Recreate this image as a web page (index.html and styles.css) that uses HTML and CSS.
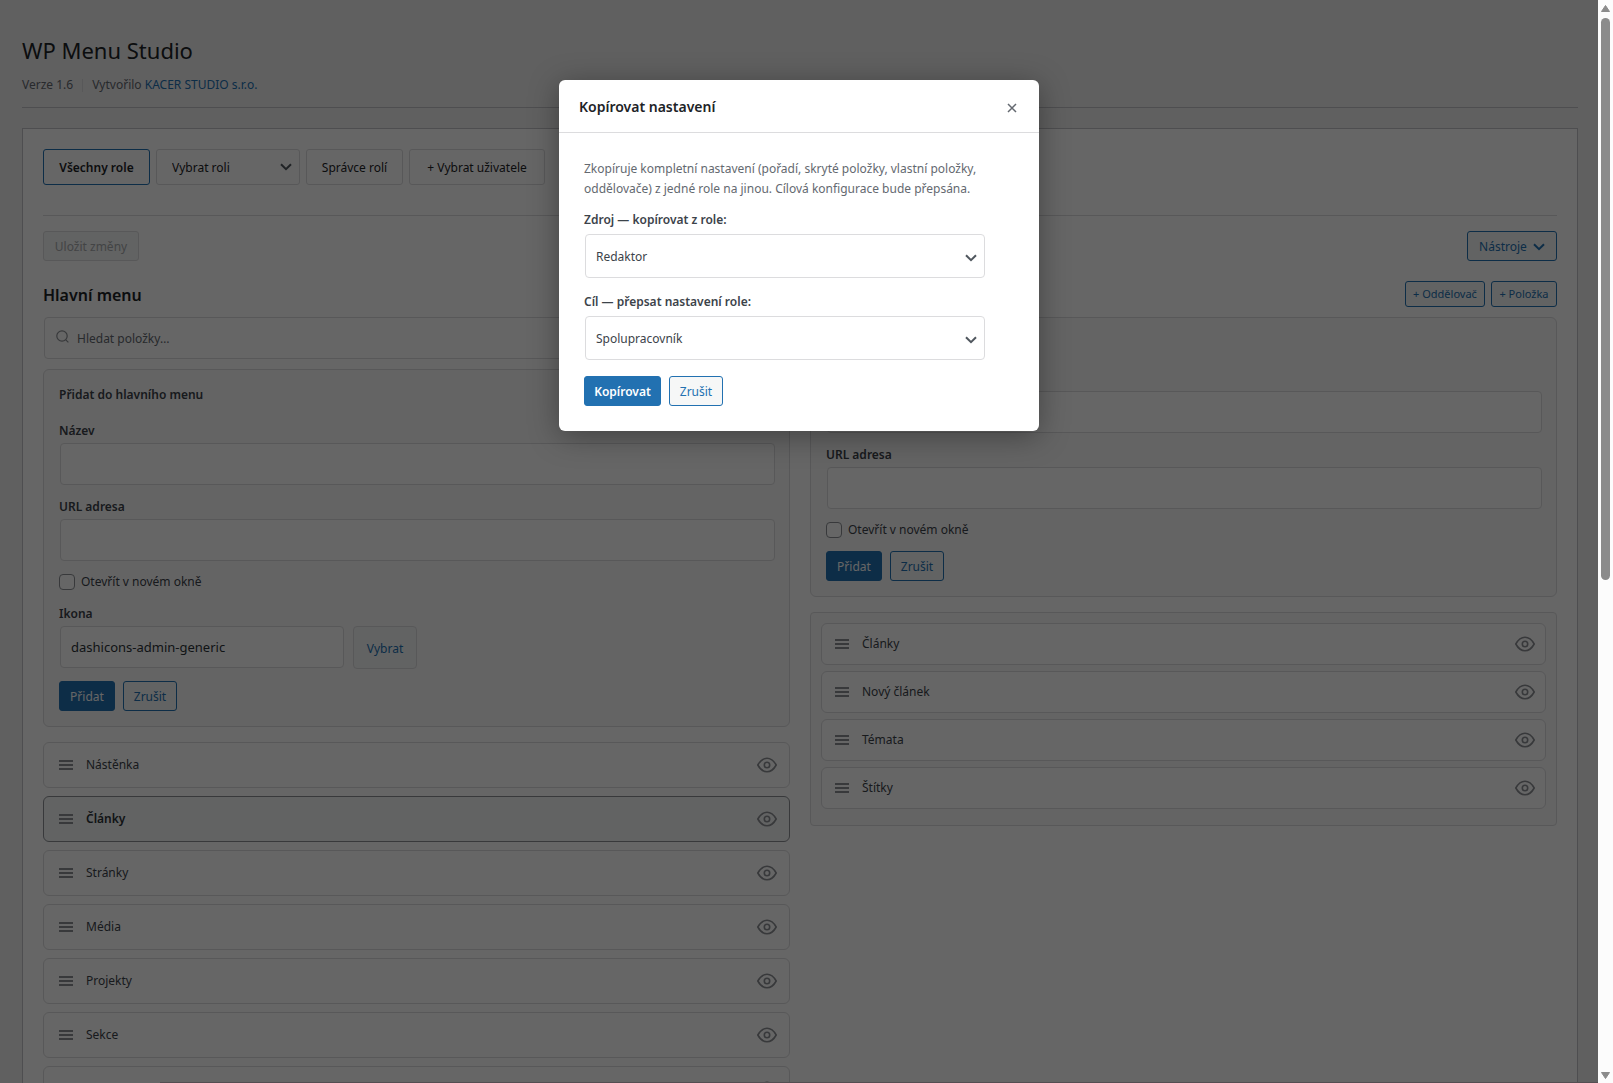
FILE: index.html
```html
<!DOCTYPE html>
<html lang="cs">
<head>
<meta charset="utf-8">
<meta name="viewport" content="width=device-width, initial-scale=1">
<title>WP Menu Studio</title>
<link rel="stylesheet" href="styles.css">
</head>
<body>
<svg class="sprite" aria-hidden="true">
  <symbol id="grip" viewBox="0 0 14 10"><path d="M0 1h14M0 5h14M0 9h14" stroke="currentColor" stroke-width="2" fill="none"/></symbol>
  <symbol id="eye" viewBox="0 0 20 16"><path d="M.8 8C3 4 6.200 1.200 10 1.200S17 4 19.200 8C17 12 13.800 14.800 10 14.800S3 12 .8 8z" fill="none" stroke="currentColor" stroke-width="1.600" stroke-linejoin="round"/><circle cx="10" cy="8" r="2.700" fill="none" stroke="currentColor" stroke-width="1.600"/></symbol>
  <symbol id="chevron" viewBox="0 0 12 8"><path d="M1 1.200l5 5 5-5" fill="none" stroke="currentColor" stroke-width="2"/></symbol>
</svg>
<div class="shell">
  <div class="page">
    <main class="wrap">
      <header class="page-head">
        <h1 class="page-title">WP Menu Studio</h1>
        <p class="meta"><span>Verze 1.6</span><span class="meta-by">Vytvořilo <a href="#">KACER STUDIO s.r.o.</a></span></p>
      </header>

      <section class="panel">
        <div class="roles">
          <button type="button" class="role role-all">Všechny role</button>
          <div class="select-wrap role-select">
            <select class="role" aria-label="Vybrat roli"><option>Vybrat roli</option></select>
            <svg class="chevron"><use href="#chevron"/></svg>
          </div>
          <button type="button" class="role role-manage">Správce rolí</button>
          <button type="button" class="role role-user">+ Vybrat uživatele</button>
        </div>

        <div class="toolbar">
          <button type="button" class="btn btn-save" disabled>Uložit změny</button>
          <button type="button" class="btn btn-tools">Nástroje <svg class="chevron"><use href="#chevron"/></svg></button>
        </div>

        <div class="columns">
          <section class="column">
            <div class="column-head"><h2>Hlavní menu</h2></div>
            <div class="search">
              <svg class="search-icon" viewBox="0 0 13 13"><circle cx="6" cy="6" r="5.200" fill="none" stroke="currentColor" stroke-width="1.200"/><path d="M9.800 9.800l2.600 2.600" stroke="currentColor" stroke-width="1.200"/></svg>
              <input type="search" class="text-input" placeholder="Hledat položky…" aria-label="Hledat položky">
            </div>
            <form class="card">
              <h3 class="card-title">Přidat do hlavního menu</h3>
              <div class="field"><label for="main-name">Název</label><input class="text-input" id="main-name" type="text"></div>
              <div class="field"><label for="main-url">URL adresa</label><input class="text-input" id="main-url" type="text"></div>
              <label class="check"><input type="checkbox">Otevřít v novém okně</label>
              <div class="field">
                <label for="main-icon">Ikona</label>
                <div class="icon-row">
                  <input class="text-input" id="main-icon" type="text" value="dashicons-admin-generic">
                  <button type="button" class="btn-pick">Vybrat</button>
                </div>
              </div>
              <div class="actions"><button type="button" class="btn btn-primary btn-add">Přidat</button><button type="button" class="btn btn-cancel">Zrušit</button></div>
            </form>
            <ul class="items">
              <li class="item"><svg class="grip"><use href="#grip"/></svg><span>Nástěnka</span><button type="button" class="toggle" aria-label="Skrýt"><svg><use href="#eye"/></svg></button></li>
              <li class="item item-active"><svg class="grip"><use href="#grip"/></svg><span>Články</span><button type="button" class="toggle" aria-label="Skrýt"><svg><use href="#eye"/></svg></button></li>
              <li class="item"><svg class="grip"><use href="#grip"/></svg><span>Stránky</span><button type="button" class="toggle" aria-label="Skrýt"><svg><use href="#eye"/></svg></button></li>
              <li class="item"><svg class="grip"><use href="#grip"/></svg><span>Média</span><button type="button" class="toggle" aria-label="Skrýt"><svg><use href="#eye"/></svg></button></li>
              <li class="item"><svg class="grip"><use href="#grip"/></svg><span>Projekty</span><button type="button" class="toggle" aria-label="Skrýt"><svg><use href="#eye"/></svg></button></li>
              <li class="item"><svg class="grip"><use href="#grip"/></svg><span>Sekce</span><button type="button" class="toggle" aria-label="Skrýt"><svg><use href="#eye"/></svg></button></li>
              <li class="item"><button type="button" class="toggle" aria-label="Skrýt"><svg><use href="#eye"/></svg></button></li>
            </ul>
          </section>

          <section class="column">
            <div class="column-head column-head-end">
              <button type="button" class="btn btn-small btn-separator">+ Oddělovač</button>
              <button type="button" class="btn btn-small btn-item">+ Položka</button>
            </div>
            <form class="card">
              <div class="card-title"></div>
              <div class="field field-unlabelled"><input class="text-input" type="text" aria-label="Název"></div>
              <div class="field"><label for="sub-url">URL adresa</label><input class="text-input" id="sub-url" type="text"></div>
              <label class="check"><input type="checkbox">Otevřít v novém okně</label>
              <div class="actions"><button type="button" class="btn btn-primary btn-add">Přidat</button><button type="button" class="btn btn-cancel">Zrušit</button></div>
            </form>
            <ul class="items items-nested">
              <li class="item"><svg class="grip"><use href="#grip"/></svg><span>Články</span><button type="button" class="toggle" aria-label="Skrýt"><svg><use href="#eye"/></svg></button></li>
              <li class="item"><svg class="grip"><use href="#grip"/></svg><span>Nový článek</span><button type="button" class="toggle" aria-label="Skrýt"><svg><use href="#eye"/></svg></button></li>
              <li class="item"><svg class="grip"><use href="#grip"/></svg><span>Témata</span><button type="button" class="toggle" aria-label="Skrýt"><svg><use href="#eye"/></svg></button></li>
              <li class="item"><svg class="grip"><use href="#grip"/></svg><span>Štítky</span><button type="button" class="toggle" aria-label="Skrýt"><svg><use href="#eye"/></svg></button></li>
            </ul>
          </section>
        </div>
      </section>
    </main>

    <div class="overlay">
      <div class="modal" role="dialog" aria-modal="true" aria-labelledby="modal-title">
        <header class="modal-head">
          <h2 id="modal-title">Kopírovat nastavení</h2>
          <button type="button" class="modal-close" aria-label="Zavřít"><svg viewBox="0 0 10 10"><path d="M1 1l8 8M9 1l-8 8" stroke="currentColor" stroke-width="1.500"/></svg></button>
        </header>
        <form class="modal-body">
          <p class="modal-text">Zkopíruje kompletní nastavení (pořadí, skryté položky, vlastní položky, oddělovače) z jedné role na jinou. Cílová konfigurace bude přepsána.</p>
          <label for="copy-from">Zdroj — kopírovat z role:</label>
          <div class="select-wrap copy-select"><select id="copy-from"><option>Redaktor</option></select><svg class="chevron"><use href="#chevron"/></svg></div>
          <label for="copy-to">Cíl — přepsat nastavení role:</label>
          <div class="select-wrap copy-select"><select id="copy-to"><option>Spolupracovník</option></select><svg class="chevron"><use href="#chevron"/></svg></div>
          <div class="actions"><button type="button" class="btn btn-primary btn-copy">Kopírovat</button><button type="button" class="btn btn-cancel">Zrušit</button></div>
        </form>
      </div>
    </div>
    <div class="edge"></div>
  </div>
  <div class="scrollbar" aria-hidden="true">
    <svg viewBox="0 0 9 7"><path d="M4.500 0.500L8.500 6.500H.5z" fill="#8b8b8b" stroke="#8b8b8b" stroke-linejoin="round"/></svg>
    <div class="track"><div class="thumb"></div></div>
    <svg viewBox="0 0 9 7"><path d="M4.500 6.500L8.500 .5H.5z" fill="#8b8b8b" stroke="#8b8b8b" stroke-linejoin="round"/></svg>
  </div>
</div>
</body>
</html>
```

FILE: styles.css
```css
* { box-sizing: border-box; }

body {
  margin: 0;
  background: #f0f0f1;
  color: #3c434a;
  font: 12px/20px "Noto Sans", "Open Sans", sans-serif;
}

h1, h2, h3, p, ul { margin: 0; padding: 0; }
ul { list-style: none; }
a { color: #2271b1; text-decoration: none; }
svg { display: block; }
button, input, select { font: inherit; color: inherit; margin: 0; }
.sprite { display: none; }

.shell { display: flex; height: 100vh; overflow: hidden; }
.page { position: relative; flex: 1; min-width: 0; overflow: hidden; }
.wrap { padding: 35px 20px 0 22px; }

/* Page heading */
.page-head { padding-bottom: 12px; border-bottom: 1px solid #c3c4c7; margin-bottom: 20px; }
.page-title { font-size: 22px; font-weight: 400; line-height: 30px; color: #1d2327; }
.meta { display: flex; margin-top: 10px; color: #646970; }
.meta-by { margin-left: 9px; padding-left: 10px; background: linear-gradient(#dcdcde, #dcdcde) 0 4px / 1px 13px no-repeat; }

.panel { background: #fff; border: 1px solid #c3c4c7; padding: 20px; }

/* Role switcher */
.roles { display: flex; gap: 6px; padding-bottom: 30px; border-bottom: 1px solid #dcdcde; }
.role {
  height: 36px;
  border: 1px solid #dcdcde;
  border-radius: 3px;
  background: #fff;
  color: #1d2327;
  padding: 2px 10px 0;
}
.role-all { width: 107px; border-color: #2271b1; font-weight: 600; }
.role-select { width: 144px; }
.role-select .role { padding-left: 15px; }
.role-manage { width: 97px; }
.role-user { width: 136px; }

.select-wrap { position: relative; }
.select-wrap select { width: 100%; appearance: none; }
.chevron { width: 12px; height: 8px; }
.select-wrap .chevron { position: absolute; right: 8px; top: calc(50% - 4px); pointer-events: none; color: #50575e; }

/* Buttons */
.btn {
  height: 30px;
  padding: 2px 8px 0;
  border: 1px solid #2271b1;
  border-radius: 3px;
  background: #f6f7f7;
  color: #2271b1;
  white-space: nowrap;
}
.btn-primary { background: #2271b1; color: #fff; }
.btn-copy { min-width: 77px; font-weight: 600; }
.btn-add { min-width: 56px; }
.btn-cancel { min-width: 54px; }
.btn-save { min-width: 96px; border-color: #dcdcde; color: #a7aaad; }
.btn-tools { display: flex; align-items: center; justify-content: center; gap: 6px; min-width: 90px; }
.btn-small { height: 26px; padding: 0 6px; font-size: 11px; }
.btn-separator { min-width: 80px; }
.btn-item { min-width: 66px; }
.actions { display: flex; gap: 8px; }

.toolbar { display: flex; justify-content: space-between; padding: 15px 0 20px; }

/* Two-column editor */
.columns { display: grid; grid-template-columns: 1fr 1fr; gap: 20px; align-items: start; }
.column-head { display: flex; align-items: center; height: 26px; margin-bottom: 10px; }
.column-head h2 { padding-top: 2px; font-size: 16px; font-weight: 600; color: #1d2327; }
.column-head-end { justify-content: flex-end; gap: 6px; }

.text-input {
  width: 100%;
  height: 42px;
  border: 1px solid #dcdcde;
  border-radius: 4px;
  background: #fff;
  padding: 0 10px;
  font-size: 13px;
  color: #2c3338;
  outline: none;
}

.search { position: relative; margin: 0 1px 10px; }
.search .text-input { display: block; padding-left: 32px; font-size: 12px; }
.search .text-input::placeholder { color: #646970; opacity: 1; }
.search-icon { position: absolute; left: 12px; top: 13px; width: 13px; height: 13px; color: #8c8f94; }

.card {
  display: flex;
  flex-direction: column;
  gap: 10px;
  margin-bottom: 15px;
  padding: 15px;
  border: 1px solid #dcdcde;
  border-radius: 6px;
  background: #fafafa;
}
.card-title { height: 20px; margin-bottom: 6px; font-size: 12px; font-weight: 600; }
.field { display: flex; flex-direction: column; margin-right: -1px; padding: 0 0 1px 1px; }
.field label { margin: 0 0 2px -1px; font-weight: 600; }
.field-unlabelled { padding-top: 22px; }
.check { display: flex; align-items: center; gap: 6px; height: 20px; }
.check input {
  appearance: none;
  width: 16px;
  height: 16px;
  border: 1px solid #8c8f94;
  border-radius: 4px;
  background: #fff;
}
.field + .field { padding-top: 1px; }
.check + .field { padding-top: 2px; }
.check + .actions { padding-top: 1px; }
.icon-row { display: flex; gap: 9px; margin-bottom: 2px; }
.icon-row .text-input { width: 284px; }
.btn-pick {
  width: 64px;
  height: 43px;
  padding: 2px 0 0;
  border: 1px solid #dcdcde;
  border-radius: 4px;
  background: #f6f7f7;
  color: #2271b1;
  margin-bottom: -1px;
}

/* Menu items */
.items { display: flex; flex-direction: column; gap: 8px; }
.item {
  display: flex;
  align-items: center;
  height: 46px;
  padding: 0 12px 0 15px;
  border: 1px solid #dcdcde;
  border-radius: 6px;
  background: #fff;
}
.item-active { border-color: #8c8f94; background: #f6f7f7; font-weight: 600; color: #2c3338; }
.grip { width: 14px; height: 10px; margin-right: 13px; color: #8c8f94; }
.toggle { margin-left: auto; padding: 0; border: 0; background: none; color: #8c8f94; }
.toggle svg { width: 20px; height: 16px; }
.items-nested {
  gap: 6px;
  padding: 10px 10px 16px;
  border: 1px solid #dcdcde;
  border-radius: 4px;
  background: #fafafa;
}
.items-nested .item { height: 42px; padding: 0 10px 0 13px; }

/* Copy dialog */
.overlay {
  position: absolute;
  inset: 0;
  padding-top: 80px;
  background: rgba(0, 0, 0, .6);
}
.modal {
  width: 480px;
  margin: 0 auto;
  border-radius: 6px;
  background: #fff;
  box-shadow: 0 5px 30px rgba(0, 0, 0, .35);
}
.modal-head {
  display: flex;
  align-items: center;
  justify-content: space-between;
  height: 53px;
  padding: 2px 20px 0;
  border-bottom: 1px solid #dcdcde;
}
.modal-head h2 { font-size: 14px; font-weight: 600; color: #1d2327; }
.modal-close { padding: 4px 2px 2px; border: 0; background: none; color: #646970; }
.modal-close svg { width: 10px; height: 10px; }
.modal-body { padding: 26px 25px 25px; }
.modal-text { margin-bottom: 11px; color: #646970; }
.modal-body label { display: block; margin-bottom: 4px; font-weight: 600; }
.copy-select { width: 400px; height: 44px; margin: 0 1px 14px; }
.copy-select select {
  height: 44px;
  padding: 2px 10px 0;
  border: 1px solid #dcdcde;
  border-radius: 4px;
  background: #fff;
}
.copy-select .chevron { top: calc(50% - 2px); }
.modal-body .actions { padding-top: 2px; }

.edge { position: absolute; left: 160px; right: 0; bottom: 0; height: 1px; background: #544e51; }

/* Window scrollbar */
.scrollbar {
  display: flex;
  flex-direction: column;
  gap: 6px;
  width: 15px;
  padding: 5px 3px 4px;
  background: #fcfcfc;
}
.scrollbar svg { width: 9px; height: 7px; }
.track { flex: 1; }
.thumb { height: 53.6%; border-radius: 5px; background: #8b8b8b; }
```
